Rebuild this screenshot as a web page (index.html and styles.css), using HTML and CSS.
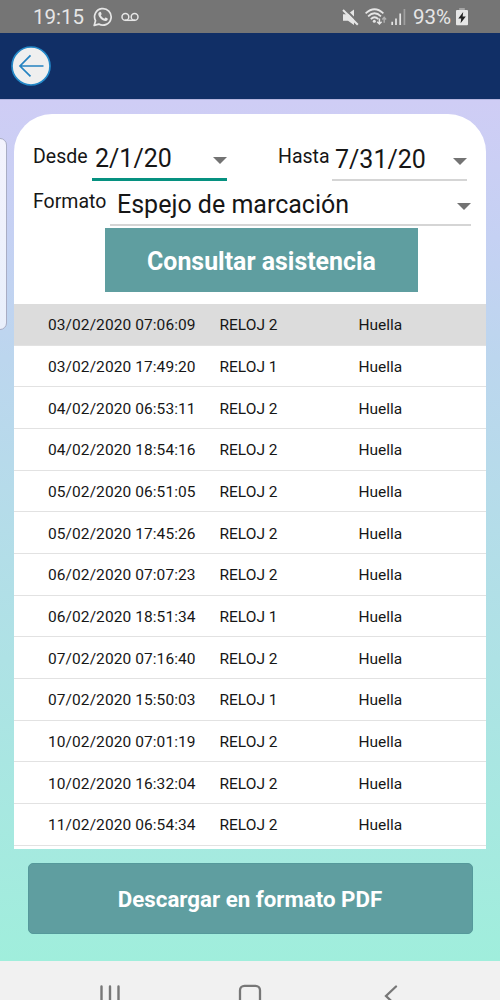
FILE: index.html
```html
<!DOCTYPE html>
<html lang="es">
<head>
    <meta charset="UTF-8">
    <meta name="viewport" content="width=device-width, initial-scale=1.0">
    <title>Consulta de asistencia</title>
    <link rel="stylesheet" href="styles.css">
</head>
<body>
    <div class="status-bar">
        <span class="time">19:15</span>
        <svg class="whatsapp" width="20" height="20" viewBox="0 0 20 20">
            <path d="M1.2 18.4 L2.5 13.7 A8.3 8.3 0 1 1 5.8 17.1 Z" fill="none" stroke="#e6e6e6" stroke-width="1.7" stroke-linejoin="round"/>
            <path d="M6.4 5.2 C7.3 4.5 7.8 4.8 8.1 5.6 L8.6 7 C8.7 7.5 8.1 8 7.8 8.3 C8.5 9.8 9.7 11 11.3 11.7 L12.3 10.7 C12.7 10.4 13 10.7 14.6 11.5 C15.3 12 14.3 14 12.6 14 C9 14 5.2 9.7 5.3 7.1 C5.3 6.2 5.8 5.6 6.4 5.2 Z" fill="#e6e6e6"/>
        </svg>
        <svg class="voicemail" width="18" height="10" viewBox="0 0 18 10">
            <path d="M4 8.3 H14" stroke="#e6e6e6" stroke-width="1.5"/>
            <circle cx="4.4" cy="4.9" r="3.4" fill="none" stroke="#e6e6e6" stroke-width="1.5"/>
            <circle cx="13.6" cy="4.9" r="3.4" fill="none" stroke="#e6e6e6" stroke-width="1.5"/>
        </svg>
        <div class="status-right">
            <svg class="mute" width="17" height="17" viewBox="0 0 17 17">
                <path d="M1 5.2 H5.5 L12 .5 V16 L6 11.8 H1 Z" fill="#e6e6e6"/>
                <path d="M3 0 L17.2 14.2" stroke="#757575" stroke-width="2"/>
                <path d="M1 1 L15.8 15.8" stroke="#e6e6e6" stroke-width="2"/>
            </svg>
            <svg class="wifi" width="22" height="18" viewBox="0 0 22 18">
                <g fill="none" stroke="#e6e6e6" stroke-width="1.7">
                    <path d="M.6 5.3 Q9.5 -2.8 18.4 5.3"/>
                    <path d="M3.1 8.3 Q9.5 2.2 16 8.3"/>
                    <path d="M5.8 11.1 Q9.5 7.4 13.3 11.1"/>
                    <path d="M14.4 10.5 V16 M12.2 13.8 L14.4 16 L16.6 13.8" stroke-width="1.5"/>
                </g>
                <circle cx="9.3" cy="13.3" r="1.5" fill="#e6e6e6"/>
                <path d="M19.2 14.7 V9.6 M17.3 11.5 L19.2 9.4 L21.1 11.5" fill="none" stroke="#b0b0b0" stroke-width="1.4"/>
            </svg>
            <svg class="signal" width="15" height="16" viewBox="0 0 15 16">
                <path d="M1.2 12.8 V16 M5 9.5 V16 M9.2 4.5 V16" stroke="#e6e6e6" stroke-width="1.7"/>
                <path d="M13.4 0 V16" stroke="#a0a0a0" stroke-width="1.7"/>
            </svg>
            <span class="percent">93%</span>
            <svg class="battery" width="12" height="18" viewBox="0 0 12 18">
                <path d="M3.2 0 H8.8 V2 H3.2 Z" fill="#a5a5a5"/>
                <rect y="2" width="12" height="15.3" rx="1" fill="#e6e6e6"/>
                <path d="M7.2 4 L2.3 10.5 H5.2 L4.6 15.2 L9.8 8.5 H6.6 Z" fill="#222"/>
            </svg>
        </div>
    </div>

    <header>
        <svg class="back" width="40" height="40" viewBox="0 0 40 40">
            <circle cx="20" cy="20" r="19" fill="#efefef" stroke="#2388c8" stroke-width="1.7"/>
            <path d="M32.5 20 H9 M19.5 9.3 L9 20 L19.5 30.4" fill="none" stroke="#2583c1" stroke-width="1.7"/>
        </svg>
    </header>

    <main>
        <div class="edge-handle"></div>
        <div class="card">
            <form>
                <div class="row dates">
                    <label>Desde</label>
                    <div class="select date active">2/1/20</div>
                    <label class="until">Hasta</label>
                    <div class="select date">7/31/20</div>
                </div>
                <div class="row">
                    <label>Formato</label>
                    <div class="select format">Espejo de marcación</div>
                </div>
                <button type="button" class="search">Consultar asistencia</button>
            </form>
            <ul class="list">
                <li class="selected"><span>03/02/2020 07:06:09</span><span>RELOJ 2</span><span>Huella</span></li>
                <li><span>03/02/2020 17:49:20</span><span>RELOJ 1</span><span>Huella</span></li>
                <li><span>04/02/2020 06:53:11</span><span>RELOJ 2</span><span>Huella</span></li>
                <li><span>04/02/2020 18:54:16</span><span>RELOJ 2</span><span>Huella</span></li>
                <li><span>05/02/2020 06:51:05</span><span>RELOJ 2</span><span>Huella</span></li>
                <li><span>05/02/2020 17:45:26</span><span>RELOJ 2</span><span>Huella</span></li>
                <li><span>06/02/2020 07:07:23</span><span>RELOJ 2</span><span>Huella</span></li>
                <li><span>06/02/2020 18:51:34</span><span>RELOJ 1</span><span>Huella</span></li>
                <li><span>07/02/2020 07:16:40</span><span>RELOJ 2</span><span>Huella</span></li>
                <li><span>07/02/2020 15:50:03</span><span>RELOJ 1</span><span>Huella</span></li>
                <li><span>10/02/2020 07:01:19</span><span>RELOJ 2</span><span>Huella</span></li>
                <li><span>10/02/2020 16:32:04</span><span>RELOJ 2</span><span>Huella</span></li>
                <li><span>11/02/2020 06:54:34</span><span>RELOJ 2</span><span>Huella</span></li>
            </ul>
        </div>
        <button type="button" class="download">Descargar en formato PDF</button>
    </main>

    <nav>
        <svg width="22" height="24" viewBox="0 0 22 24">
            <path d="M2.5 3.5 V24 M11 3.5 V24 M19.5 3.5 V24" stroke="#777" stroke-width="2.4" stroke-linecap="round"/>
        </svg>
        <svg class="home" width="24" height="24" viewBox="0 0 24 24">
            <rect x="2" y="2.8" width="20" height="20" rx="4.5" fill="none" stroke="#777" stroke-width="2.3"/>
        </svg>
        <svg width="14" height="24" viewBox="0 0 14 24">
            <path d="M12 3.5 L2 13 L12 22.5" fill="none" stroke="#777" stroke-width="2.3" stroke-linecap="round"/>
        </svg>
    </nav>
</body>
</html>
```
FILE: styles.css
```css
* {
    box-sizing: border-box;
}
body {
    font-family: Roboto, sans-serif;
    color: #161616;
    margin: 0;
    height: 1000px;
    display: flex;
    flex-direction: column;
    overflow: hidden;
}
.status-bar {
    display: flex;
    align-items: center;
    height: 33px;
    flex: none;
    padding: 1px 32px 0 33px;
    background-color: #757575;
    color: #e6e6e6;
    font-size: 20.5px;
}
.whatsapp {
    margin-left: 9px;
}
.voicemail {
    margin-left: 8px;
}
.status-right {
    display: flex;
    align-items: center;
    margin-left: auto;
}
.wifi {
    margin-left: 6px;
}
.signal {
    margin-left: 4px;
}
.percent {
    margin-left: 7px;
}
.battery {
    margin-left: 5px;
}
header {
    display: flex;
    height: 67px;
    flex: none;
    padding: 13px 11px;
    background-color: #112f66;
    border-bottom: 1px solid #b5b5df;
}
main {
    position: relative;
    height: 861px;
    flex: none;
    padding: 14px 14px 0;
    background: linear-gradient(#cfcdf5, #c5d1f3 16%, #bcd6ee 30%, #a0eedc);
}
/* system side panel handle, floats over the page */
.edge-handle {
    position: absolute;
    left: -8px;
    top: 38px;
    width: 15px;
    height: 192px;
    border: 1px solid #a9adc4;
    border-radius: 7px;
    background: linear-gradient(#f3f3fd, #e9effb);
}
.card {
    height: 735px;
    border-radius: 38px 38px 0 0;
    background-color: #fff;
    overflow: hidden;
}
form {
    display: flex;
    flex-direction: column;
    height: 190px;
    padding: 30px 14px 0 19px;
}
.row {
    display: flex;
    height: 45px;
}
.row:not(.dates) {
    height: 39px;
}
label {
    font-size: 19.5px;
    line-height: 26px;
    white-space: nowrap;
    width: 59px;
}
.row:not(.dates) label {
    width: 77px;
}
.dates .until {
    width: 54px;
    margin-left: 51px;
}
.select {
    display: flex;
    align-items: center;
    justify-content: space-between;
    font-size: 25px;
    white-space: nowrap;
    border-bottom: 2px solid #d5d5d5;
}
.select::after {
    content: "";
    margin-top: 4px;
    border: 7px solid transparent;
    border-top-color: #737373;
    border-bottom: 0;
}
.date {
    width: 135px;
    height: 37px;
    padding: 0 0 5px 3px;
}
.date.active {
    border-bottom: 3px solid #069180;
}
.format {
    width: 361px;
    height: 37px;
    padding: 0 0 4px 7px;
}
button {
    font-family: inherit;
    font-weight: bold;
    color: #fff;
    background-color: #5f9ea0;
    border: 0;
    padding: 0;
}
.search {
    width: 313px;
    height: 64px;
    margin-left: 72px;
    padding-top: 2px;
    font-size: 24.9px;
}
.list {
    list-style: none;
    margin: 0;
    padding: 0;
}
.list li {
    display: grid;
    grid-template-columns: 171.5px 139px 1fr;
    align-items: center;
    height: 41.68px;
    padding: 2px 0 0 34px;
    font-size: 15.5px;
    white-space: nowrap;
    border-bottom: 1px solid #e2e2e2;
}
.list li span:first-child {
    letter-spacing: 0.08px;
}
.list .selected {
    background-color: #dcdcdc;
}
.download {
    display: block;
    width: 445px;
    height: 71px;
    margin: 14px 0 0 13.5px;
    border: 1px solid #55999b;
    border-radius: 5px;
    font-size: 22.3px;
}
nav {
    display: flex;
    height: 39px;
    flex: none;
    padding: 22px 102px 0 99px;
    justify-content: space-between;
    background-color: #f1f1f1;
}
.home {
    margin-right: 5px;
}
```
